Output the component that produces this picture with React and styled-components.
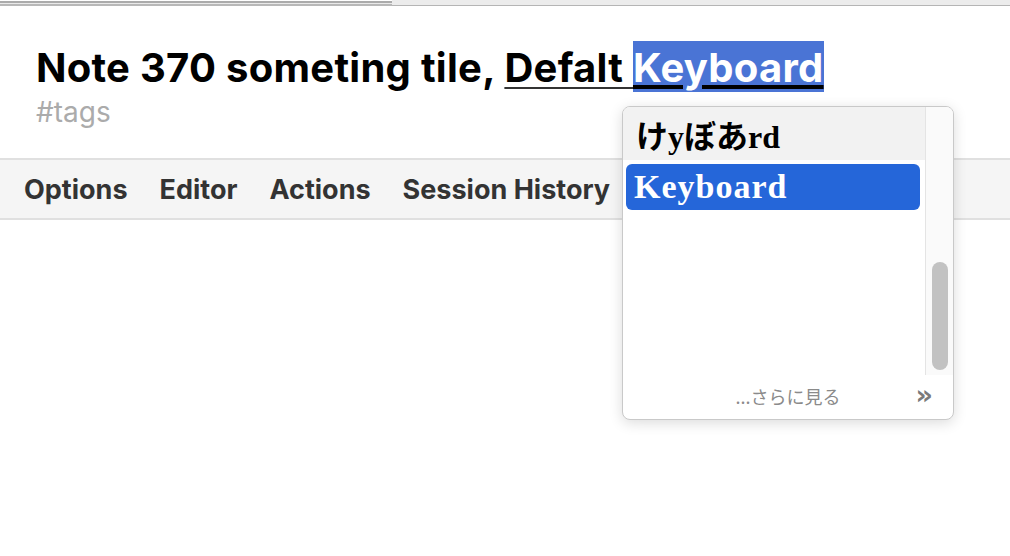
import React from "react"
import styled, { createGlobalStyle } from "styled-components"

const GlobalStyle = createGlobalStyle`
  html, body {
    margin: 0;
    padding: 0;
    background: #ffffff;
  }
  body {
    font-family: Inter, "Noto Sans", sans-serif;
  }
`

const Page = styled.div`
  position: relative;
  width: 1010px;
  height: 556px;
  overflow: hidden;
  background: #fff;
`

const TabStrip = styled.div`
  display: flex;
  height: 6px;
`

const TabLeft = styled.div`
  width: 392px;
  background: #e9e9e9;
  border-top: 2px solid #ababab;
  border-bottom: 2px solid #b8b8b8;
  box-sizing: border-box;
  margin-top: 1px;
  height: 5px;
`

const TabRight = styled.div`
  flex: 1;
  background: #ececec;
  border-bottom: 1px solid #b5b5b5;
  box-sizing: border-box;
  height: 6px;
`

const Header = styled.header`
  padding: 38px 36px 0;
  height: 152px;
  box-sizing: border-box;
`

const Title = styled.h1`
  margin: 0;
  font-family: Inter, "Noto Sans", sans-serif;
  font-size: 40px;
  font-weight: 700;
  letter-spacing: 0.28px;
  line-height: 48px;
  color: #000;
  white-space: nowrap;
`

const Composing = styled.span`
  text-decoration: underline;
  text-decoration-color: #333;
  text-decoration-thickness: 2px;
  text-underline-offset: 5px;
`

const Selected = styled.span`
  background: #4a74d5;
  color: #fff;
  padding: 2px 0 0;
  text-decoration: underline;
  text-decoration-color: #000;
  text-decoration-thickness: 4px;
  text-underline-offset: 3px;
`

const Tags = styled.div`
  margin-top: 3px;
  font-family: Inter, "Noto Sans", sans-serif;
  font-size: 28px;
  line-height: 34px;
  color: #ababab;
`

const Toolbar = styled.nav`
  display: flex;
  align-items: center;
  gap: 32px;
  height: 62px;
  box-sizing: border-box;
  padding: 0 24px;
  background: #f5f5f5;
  border-top: 2px solid #e0e0e0;
  border-bottom: 2px solid #e0e0e0;
`

const ToolItem = styled.span`
  font-family: Inter, "Noto Sans", sans-serif;
  font-size: 27px;
  font-weight: 700;
  letter-spacing: 0;
  color: #333;
`

const Popup = styled.div`
  position: absolute;
  left: 622px;
  top: 106px;
  width: 332px;
  height: 314px;
  box-sizing: border-box;
  border: 1px solid #c9c9c9;
  border-radius: 8px;
  background: #fff;
  box-shadow: 0 3px 14px rgba(0, 0, 0, 0.14);
  display: grid;
  grid-template-columns: 1fr 28px;
  grid-template-rows: 268px 1fr;
  overflow: hidden;
`

const List = styled.ul`
  list-style: none;
  margin: 0;
  padding: 0;
  display: flex;
  flex-direction: column;
`

const Candidate = styled.li`
  display: flex;
  align-items: center;
  box-sizing: border-box;
  height: ${(p) => (p.$active ? "46px" : "53px")};
  margin: ${(p) => (p.$active ? "4px 5px 0 3px" : "0")};
  padding: ${(p) => (p.$active ? "0 0 0 8px" : "0 0 0 13px")};
  border-radius: ${(p) => (p.$active ? "6px" : "0")};
  background: ${(p) => (p.$active ? "#2566d9" : "#f2f2f2")};
  color: ${(p) => (p.$active ? "#fff" : "#000")};
  font-family: "Liberation Serif", "Noto Sans CJK JP", serif;
  font-size: ${(p) => (p.$active ? "34px" : "32px")};
  letter-spacing: ${(p) => (p.$active ? "1px" : "0")};
  font-weight: 700;
`

const ScrollTrack = styled.div`
  position: relative;
  background: #fafafa;
  border-left: 1px solid #e4e4e4;
`

const ScrollThumb = styled.div`
  position: absolute;
  left: 6px;
  top: 155px;
  width: 16px;
  height: 108px;
  border-radius: 8px;
  background: #c2c2c2;
`

const Footer = styled.div`
  grid-column: 1 / 3;
  position: relative;
  display: flex;
  align-items: center;
  justify-content: center;
  font-family: "Noto Sans CJK JP", "Noto Sans", sans-serif;
  font-size: 18px;
  color: #8a8a8a;
  padding-bottom: 2px;
`

const More = styled.span`
  position: absolute;
  right: 20px;
  top: 4px;
  font-family: "DejaVu Sans", sans-serif;
  font-size: 27px;
  font-weight: 700;
  color: #7a7a7a;
`

export default function App() {
  return (
    <Page>
      <GlobalStyle />
      <TabStrip>
        <TabLeft />
        <TabRight />
      </TabStrip>
      <Header>
        <Title>
          Note 370 someting tile, <Composing>Defalt </Composing>
          <Selected>Keyboard</Selected>
        </Title>
        <Tags>#tags</Tags>
      </Header>
      <Toolbar>
        <ToolItem>Options</ToolItem>
        <ToolItem>Editor</ToolItem>
        <ToolItem>Actions</ToolItem>
        <ToolItem>Session History</ToolItem>
      </Toolbar>
      <Popup>
        <List>
          <Candidate>けyぼあrd</Candidate>
          <Candidate $active>Keyboard</Candidate>
        </List>
        <ScrollTrack>
          <ScrollThumb />
        </ScrollTrack>
        <Footer>
          ...さらに見る
          <More>»</More>
        </Footer>
      </Popup>
    </Page>
  )
}
